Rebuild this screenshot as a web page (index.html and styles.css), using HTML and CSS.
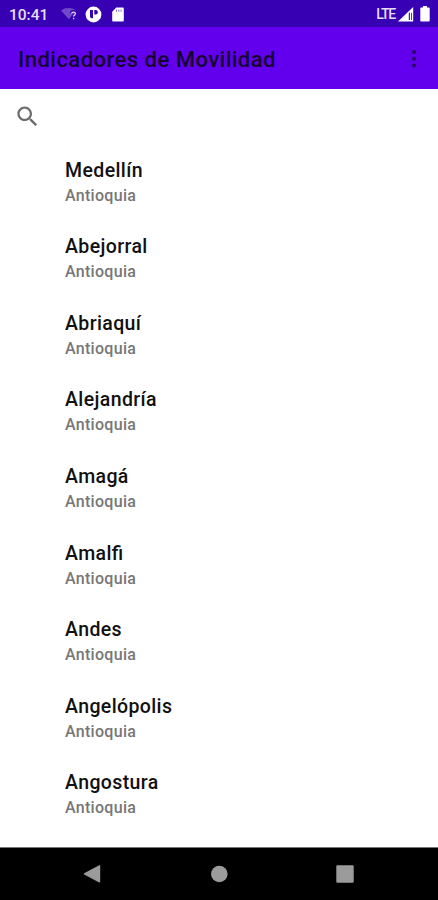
FILE: index.html
```
<!DOCTYPE html>
<html lang="es">
<head>
  <meta charset="UTF-8">
  <meta name="viewport" content="width=device-width, initial-scale=1.0">
  <title>Indicadores de Movilidad</title>
  <link rel="stylesheet" href="styles.css">
</head>
<body>

  <!-- Status bar -->
  <div class="status-bar">
    <span class="clock">10:41</span>
    <svg class="wifi" width="17" height="14" viewBox="0 0 17 14">
      <path d="M0 3.5C4 .2 11 .2 15 3.5L7.8 12.2z" fill="#7048c8"/>
      <path d="M10.3 6.2c.2-2.2 4.3-2.2 4.3.2 0 1.6-2 1.5-2 3.2M12.6 11v1.6" fill="none" stroke="#3700b3" stroke-width="3"/>
      <path d="M10.6 6.4c.2-1.8 3.8-1.8 3.8.1 0 1.4-1.8 1.4-1.8 3M12.6 10.8v1.4" fill="none" stroke="#e6def8" stroke-width="1.3"/>
    </svg>
    <svg class="app" width="17" height="17" viewBox="0 0 17 17">
      <circle cx="8.5" cy="8.5" r="7.9" fill="#fff"/>
      <path d="M5 4h3v8.2H6.7A1.7 1.7 0 0 1 5 10.5zM9.3 4h1.4a2.2 2.2 0 0 1 0 4.4H9.3z" fill="#3700b3"/>
    </svg>
    <svg class="sd" width="12" height="15" viewBox="0 0 12 15">
      <path d="M4.3.5h6.2c.8 0 1.3.5 1.3 1.3v11.4c0 .8-.5 1.3-1.3 1.3h-9c-.8 0-1.3-.5-1.3-1.3V4.7z" fill="#fff"/>
      <path d="M4.5 2.5v2.3M6.8 2.5v2.3M9.1 2.5v2.3" stroke="#8a68d2" stroke-width="1"/>
    </svg>
    <span class="lte">LTE</span>
    <svg class="signal" width="16" height="15" viewBox="0 0 16 15">
      <path d="M15.2 0v14.5H0z" fill="#fff"/>
      <path d="M10.8 5.8h1.1v7.2h-1.1zM13 5.8h.8v7.2H13z" fill="#3700b3"/>
    </svg>
    <svg class="battery" width="10" height="16" viewBox="0 0 10 16">
      <path d="M3 0h4v1.6h1.7c.6 0 1 .4 1 1v12c0 .6-.4 1-1 1H1.3c-.6 0-1-.4-1-1v-12c0-.6.4-1 1-1H3z" fill="#fff"/>
    </svg>
  </div>

  <!-- App bar -->
  <header class="app-bar">
    <h1>Indicadores de Movilidad</h1>
    <svg class="more" width="6" height="20" viewBox="0 0 6 20">
      <circle cx="3" cy="2.1" r="2"/>
      <circle cx="3" cy="8.8" r="2"/>
      <circle cx="3" cy="15.5" r="2"/>
    </svg>
  </header>

  <!-- Search -->
  <div class="search">
    <svg width="27" height="27" viewBox="0 0 24 24">
      <path fill="#6c6c6c" d="M15.5 14h-.79l-.28-.27C15.41 12.59 16 11.11 16 9.5 16 5.91 13.09 3 9.5 3S3 5.91 3 9.5 5.91 16 9.5 16c1.61 0 3.09-.59 4.23-1.57l.27.28v.79l5 4.99L20.49 19l-4.99-5zm-6 0C7.01 14 5 11.99 5 9.5S7.01 5 9.5 5 14 7.01 14 9.5 11.99 14 9.5 14z"/>
    </svg>
  </div>

  <!-- Municipalities -->
  <ul class="list">
    <li><h2>Medellín</h2><p>Antioquia</p></li>
    <li><h2>Abejorral</h2><p>Antioquia</p></li>
    <li><h2>Abriaquí</h2><p>Antioquia</p></li>
    <li><h2>Alejandría</h2><p>Antioquia</p></li>
    <li><h2>Amagá</h2><p>Antioquia</p></li>
    <li><h2>Amalfi</h2><p>Antioquia</p></li>
    <li><h2>Andes</h2><p>Antioquia</p></li>
    <li><h2>Angelópolis</h2><p>Antioquia</p></li>
    <li><h2>Angostura</h2><p>Antioquia</p></li>
  </ul>

  <!-- Navigation bar -->
  <nav class="nav-bar">
    <svg width="18" height="20" viewBox="0 0 18 20"><path d="M16.5 1.8v16L1.5 9.8z" fill="#9b9b9b" stroke="#9b9b9b" stroke-width="1.4" stroke-linejoin="round"/></svg>
    <svg width="18" height="18" viewBox="0 0 18 18"><circle cx="9.3" cy="9" r="8.3" fill="#9b9b9b"/></svg>
    <svg width="18" height="18" viewBox="0 0 18 18"><rect x=".3" y=".3" width="17.4" height="17.4" rx="1.2" fill="#9b9b9b"/></svg>
  </nav>

</body>
</html>
```

FILE: styles.css
```
* {
  box-sizing: border-box;
}

body {
  font-family: Roboto, sans-serif;
  background-color: #fff;
  margin: 0;
  height: 900px;
  display: flex;
  flex-direction: column;
  overflow: hidden;
}

h1, h2, p, ul {
  margin: 0;
  padding: 0;
}

svg {
  display: block;
  flex-shrink: 0;
}

/* Status bar */
.status-bar {
  display: flex;
  align-items: center;
  height: 27px;
  padding: 1px 8px 0 9px;
  background-color: #3700b3;
  color: #e6def8;
}

.clock {
  width: 52px;
  padding-top: 2px;
  font-size: 15.5px;
  font-weight: 500;
  line-height: 24px;
}

.app {
  margin-left: 7px;
}

.sd {
  margin-left: 10px;
}

.lte {
  margin-left: auto;
  font-size: 14px;
  font-weight: 500;
  letter-spacing: -1.2px;
}

.signal {
  margin-left: 3px;
}

.battery {
  margin-left: 6px;
}

/* App bar */
.app-bar {
  display: flex;
  align-items: center;
  justify-content: space-between;
  height: 62px;
  padding: 3px 21px 0 18px;
  background-color: #6200ee;
  color: #14002e;
}

.app-bar h1 {
  font-size: 22px;
  font-weight: 500;
  line-height: 30px;
  letter-spacing: 0.48px;
  white-space: nowrap;
}

.more {
  fill: #260060;
}

/* Search */
.search {
  height: 59px;
  padding: 14px 0 0 14px;
}

/* List */
.list {
  flex: 1;
  list-style: none;
  padding-left: 65px;
}

.list li {
  height: 76.6px;
  padding-top: 9.6px;
}

.list h2 {
  font-size: 19.5px;
  font-weight: 500;
  line-height: 26px;
  letter-spacing: 0.38px;
  font-feature-settings: "liga" 1;
  color: #111;
}

.list p {
  font-size: 16px;
  font-weight: 500;
  line-height: 24px;
  letter-spacing: 0.3px;
  color: #777;
}

/* Navigation bar */
.nav-bar {
  display: flex;
  align-items: center;
  justify-content: space-between;
  height: 53px;
  padding: 0 84px 0 83px;
  border-top: 1px solid #777;
  background-color: #000;
}
```
